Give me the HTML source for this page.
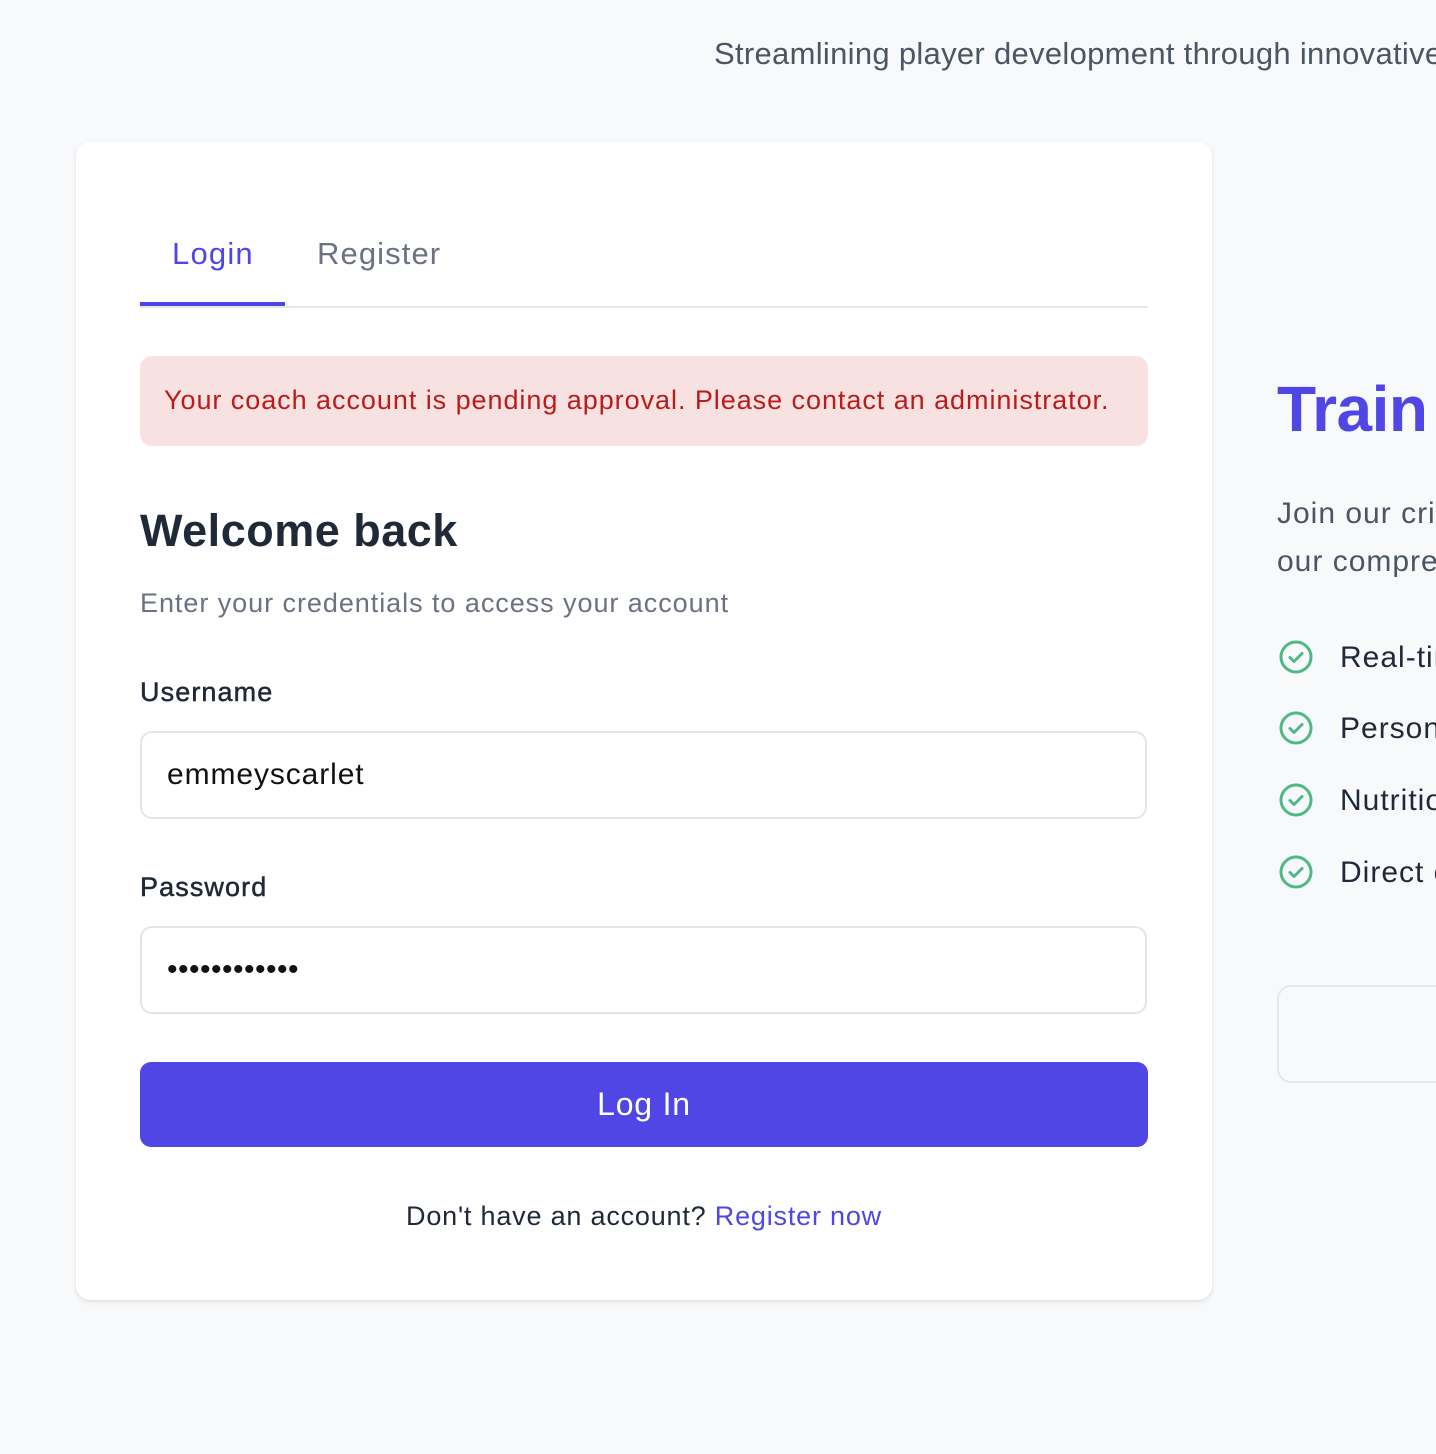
<!DOCTYPE html>
<html><head><meta charset="utf-8"><style>
*{box-sizing:border-box;margin:0;padding:0}
html,body{width:1436px;height:1454px;overflow:hidden;background:#f8f9fb;font-family:"Liberation Sans",sans-serif;position:relative;letter-spacing:0.8px}
.a{position:absolute;white-space:nowrap}
.card{position:absolute;left:76px;top:142px;width:1136px;height:1158px;background:#fff;border-radius:14px;box-shadow:0 2px 6px rgba(0,0,0,.08),0 1px 2px rgba(0,0,0,.05)}
.inp{position:absolute;left:140px;width:1007px;height:88px;border:2px solid #e3e5e9;border-radius:12px;font-size:30px;color:#111;padding-left:25px;line-height:84px}
.chk{position:absolute;left:1279px;width:34px;height:34px}
.ft{position:absolute;left:1340px;font-size:30px;color:#1f2937;white-space:nowrap;letter-spacing:1px}
.lb{position:absolute;left:140px;font-size:27px;color:#1f2937;font-weight:normal;-webkit-text-stroke:0.5px #1f2937;letter-spacing:1.1px}
</style></head><body>
<div class="a" style="left:714px;top:36px;font-size:31px;color:#4b5563;letter-spacing:0.3px">Streamlining player development through innovative technology</div>
<div class="card"></div>
<div class="a" style="left:172px;top:236px;font-size:31px;color:#4f46e5;letter-spacing:1.2px">Login</div>
<div class="a" style="left:317px;top:236px;font-size:31px;color:#6b7280;letter-spacing:1.1px">Register</div>
<div class="a" style="left:140px;top:306px;width:1008px;height:2px;background:#e5e7eb"></div>
<div class="a" style="left:140px;top:302px;width:145px;height:4px;background:#4f46e5"></div>
<div class="a" style="left:140px;top:356px;width:1008px;height:90px;background:#f8e1e1;border-radius:12px"></div>
<div class="a" style="left:164px;top:385px;font-size:27px;color:#b91c1c;letter-spacing:0.95px">Your coach account is pending approval. Please contact an administrator.</div>
<div class="a" style="left:140px;top:505px;font-size:45px;font-weight:bold;color:#1f2937;letter-spacing:0.5px">Welcome back</div>
<div class="a" style="left:140px;top:588px;font-size:27px;color:#6b7280;letter-spacing:0.95px">Enter your credentials to access your account</div>
<div class="lb" style="top:677px">Username</div>
<div class="inp" style="top:731px;letter-spacing:0.9px">emmeyscarlet</div>
<div class="lb" style="top:872px">Password</div>
<div class="inp" style="top:926px;font-size:30px;letter-spacing:0.5px">••••••••••••</div>
<div class="a" style="left:140px;top:1062px;width:1008px;height:85px;background:#4f46e5;border-radius:11px;color:#fff;font-size:32px;text-align:center;line-height:85px">Log In</div>
<div class="a" style="left:0;width:1288px;text-align:center;top:1201px;font-size:27px;color:#1f2937">Don't have an account? <span style="color:#4f46e5">Register now</span></div>
<div class="a" style="left:1277px;top:372px;font-size:64px;font-weight:bold;color:#4f46e5;letter-spacing:-0.5px">Train like a pro</div>
<div class="a" style="left:1277px;top:490px;font-size:30px;color:#4b5563;line-height:48px;letter-spacing:1px">Join our cricket academy and improve your skills with<br>our comprehensive training programs</div>
<svg class="chk" style="top:640px" viewBox="0 0 34 34"><circle cx="17" cy="17" r="15" fill="none" stroke="#4fb985" stroke-width="3"/><path d="M11 17.5l4 4 8-8" fill="none" stroke="#4fb985" stroke-width="3" stroke-linecap="round" stroke-linejoin="round"/></svg>
<svg class="chk" style="top:711px" viewBox="0 0 34 34"><circle cx="17" cy="17" r="15" fill="none" stroke="#4fb985" stroke-width="3"/><path d="M11 17.5l4 4 8-8" fill="none" stroke="#4fb985" stroke-width="3" stroke-linecap="round" stroke-linejoin="round"/></svg>
<svg class="chk" style="top:783px" viewBox="0 0 34 34"><circle cx="17" cy="17" r="15" fill="none" stroke="#4fb985" stroke-width="3"/><path d="M11 17.5l4 4 8-8" fill="none" stroke="#4fb985" stroke-width="3" stroke-linecap="round" stroke-linejoin="round"/></svg>
<svg class="chk" style="top:855px" viewBox="0 0 34 34"><circle cx="17" cy="17" r="15" fill="none" stroke="#4fb985" stroke-width="3"/><path d="M11 17.5l4 4 8-8" fill="none" stroke="#4fb985" stroke-width="3" stroke-linecap="round" stroke-linejoin="round"/></svg>
<div class="ft" style="top:641px">Real-time performance tracking</div>
<div class="ft" style="top:712px">Personalized training plans</div>
<div class="ft" style="top:784px">Nutrition guidance</div>
<div class="ft" style="top:856px">Direct coach feedback</div>
<div class="a" style="left:1277px;top:985px;width:400px;height:98px;border:2px solid #e5e7eb;border-radius:14px;background:#f8f9fb"></div>
</body></html>
